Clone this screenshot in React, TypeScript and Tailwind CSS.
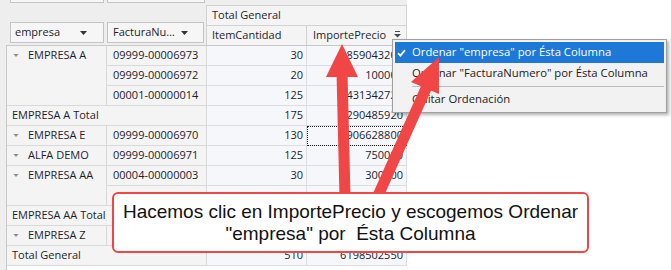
import type { ReactNode } from 'react'

function Caret({ className }: { className?: string }) {
  return (
    <svg width="7" height="4" viewBox="0 0 7 4" className={className}>
      <polygon points="0,0 7,0 3.5,4" fill="currentColor" />
    </svg>
  )
}

function SortGlyph() {
  return (
    <svg width="7" height="7" viewBox="0 0 7 7" className="text-[#4a4a4a]">
      <rect x="1" y="0" width="5" height="1" fill="currentColor" />
      <polygon points="0,3 7,3 3.5,6.5" fill="currentColor" />
    </svg>
  )
}

function Group({ children, span }: { children: ReactNode; span?: number }) {
  return (
    <div
      className={
        (span === 3 ? 'row-span-3 ' : span === 2 ? 'row-span-2 ' : '') +
        'flex items-start border-r border-b border-[#d9d9d9] bg-[#f4f4f4]'
      }
    >
      <div className="h-[19px] flex items-center pl-[6px]">
        <Caret className="text-[#8d8d8d] w-[6px] h-[3px]" />
        <span className="ml-[9px]">{children}</span>
      </div>
    </div>
  )
}

function Fact({ children }: { children?: ReactNode }) {
  return (
    <div className="flex items-center pl-[6px] border-r border-b border-[#d9d9d9] bg-[#f4f4f4]">
      {children}
    </div>
  )
}

function Num({ children, focus }: { children?: ReactNode; focus?: boolean }) {
  return (
    <div
      className={
        'flex items-center justify-end pr-[3px] border-r border-b border-[#dcdde3] bg-[#f6f7fb]' +
        (focus ? ' outline-1 outline-dotted outline-[#222] -outline-offset-1' : '')
      }
    >
      {children}
    </div>
  )
}

function TotalHead({ children }: { children: ReactNode }) {
  return (
    <div className="col-span-2 flex items-center pl-[5px] border-r border-b border-[#d9d9d9] bg-[#f4f4f4]">
      {children}
    </div>
  )
}

export default function App() {
  return (
    <div className="relative w-[671px] h-[270px] overflow-hidden bg-white flex font-['Open_Sans',sans-serif] text-[11px] text-[#1c1d2e]">
      {/* PIVOT GRID */}
      <div className="w-[407px] h-full bg-[#eeeeee] flex flex-col">
        <div className="h-[45px] flex">
          {/* field headers */}
          <div className="w-[206px] flex flex-col">
            <div className="h-[3px] flex pl-[10px] gap-[3px]">
              <div className="w-[94px] border-x border-b border-[#c4c4c4] bg-[#f6f6f6]" />
              <div className="w-[98px] border-x border-b border-[#c4c4c4] bg-[#f6f6f6]" />
            </div>
            <div className="mt-[19px] h-[21px] flex pl-[10px] gap-[3px]">
              <div className="w-[94px] border border-[#c4c4c4] bg-[#f6f6f6] flex items-center justify-between pl-[4px] pr-[16px]">
                <span>empresa</span>
                <Caret className="text-[#333]" />
              </div>
              <div className="w-[97px] border border-[#c4c4c4] bg-[#f6f6f6] flex items-center justify-between pl-[5px] pr-[15px]">
                <span>FacturaNu…</span>
                <Caret className="text-[#333]" />
              </div>
            </div>
          </div>
          {/* column headers */}
          <div className="w-[201px] pt-[5px] flex flex-col">
            <div className="h-[21px] border border-[#d2d2d2] bg-[#f4f4f4] flex items-center pl-[5px]">
              Total General
            </div>
            <div className="flex-1 flex">
              <div className="w-[101px] border-x border-[#d2d2d2] bg-[#f4f4f4] flex items-center pl-[5px]">
                ItemCantidad
              </div>
              <div className="w-[100px] border-r border-[#d2d2d2] bg-[#f4f4f4] flex items-center justify-between pl-[6px] pr-[5px]">
                <span>ImportePrecio</span>
                <span className="-mt-[3px]">
                  <SortGlyph />
                </span>
              </div>
            </div>
          </div>
        </div>

        <div className="flex-1 ml-[6px] border-l border-t border-[#c8c8c8] bg-white">
          <div className="grid grid-cols-[100px_100px_100px_100px] auto-rows-[20px]">
            <Group span={3}>EMPRESA A</Group>
            <Fact>09999-00006973</Fact>
            <Num>30</Num>
            <Num>2859043200</Num>
            <Fact>09999-00006972</Fact>
            <Num>20</Num>
            <Num>100000</Num>
            <Fact>00001-00000014</Fact>
            <Num>125</Num>
            <Num>1431342720</Num>

            <TotalHead>EMPRESA A Total</TotalHead>
            <Num>175</Num>
            <Num>4290485920</Num>

            <Group>EMPRESA E</Group>
            <Fact>09999-00006970</Fact>
            <Num>130</Num>
            <Num focus>1906628800</Num>

            <Group>ALFA DEMO</Group>
            <Fact>09999-00006971</Fact>
            <Num>125</Num>
            <Num>750000</Num>

            <Group span={2}>EMPRESA AA</Group>
            <Fact>00004-00000003</Fact>
            <Num>30</Num>
            <Num>300000</Num>
            <Fact />
            <Num />
            <Num />

            <TotalHead>EMPRESA AA Total</TotalHead>
            <Num />
            <Num />

            <Group>EMPRESA Z</Group>
            <Fact />
            <Num />
            <Num />

            <TotalHead>Total General</TotalHead>
            <Num>510</Num>
            <Num>6198502550</Num>
          </div>
        </div>
      </div>

      {/* CONTEXT MENU */}
      <div className="absolute left-[392px] top-[39px] w-[275px] h-[74px] border border-[#a0a0a0] bg-[#f2f2f2] p-[2px] text-[11.3px] text-[#1a1a1a] shadow-[2px_2px_3px_rgba(0,0,0,0.3)]">
        <div className="h-[21px] bg-[#1e78d7] text-white flex items-center">
          <svg width="9" height="8" viewBox="0 0 9 8" className="ml-[2px]">
            <path d="M1 4.2 L3.4 6.6 L8 1.2" stroke="white" strokeWidth="1.8" fill="none" />
          </svg>
          <span className="ml-[6px]">Ordenar "empresa" por Ésta Columna</span>
        </div>
        <div className="h-[21px] flex items-center pl-[17px]">
          Ordenar "FacturaNumero" por Ésta Columna
        </div>
        <div className="h-[5px] flex items-center pl-[17px]">
          <div className="h-px w-full bg-[#bdbdbd]" />
        </div>
        <div className="h-[21px] flex items-center pl-[17px]">Quitar Ordenación</div>
      </div>

      {/* ARROWS */}
      <svg
        width="671"
        height="270"
        viewBox="0 0 671 270"
        className="absolute left-0 top-0 pointer-events-none"
      >
        <line x1="345" y1="198" x2="342" y2="72" stroke="#f04646" strokeWidth="11" />
        <polygon points="342,44 326,77 358,77" fill="#f04646" />
        <line x1="377" y1="198" x2="428" y2="84" stroke="#f04646" strokeWidth="11" />
        <polygon points="439,57 411,82 439,94" fill="#f04646" />
      </svg>

      {/* CALLOUT */}
      <div className="absolute left-[112px] top-[192px] w-[477px] h-[61px] border-2 border-[#f04646] rounded-[6px] bg-white flex flex-col items-center justify-center font-['Liberation_Sans',Arial,sans-serif] text-[19px] leading-[22px] text-[#111] whitespace-pre">
        <span>Hacemos clic en ImportePrecio y escogemos Ordenar</span>
        <span>"empresa" por  Ésta Columna</span>
      </div>
    </div>
  )
}
